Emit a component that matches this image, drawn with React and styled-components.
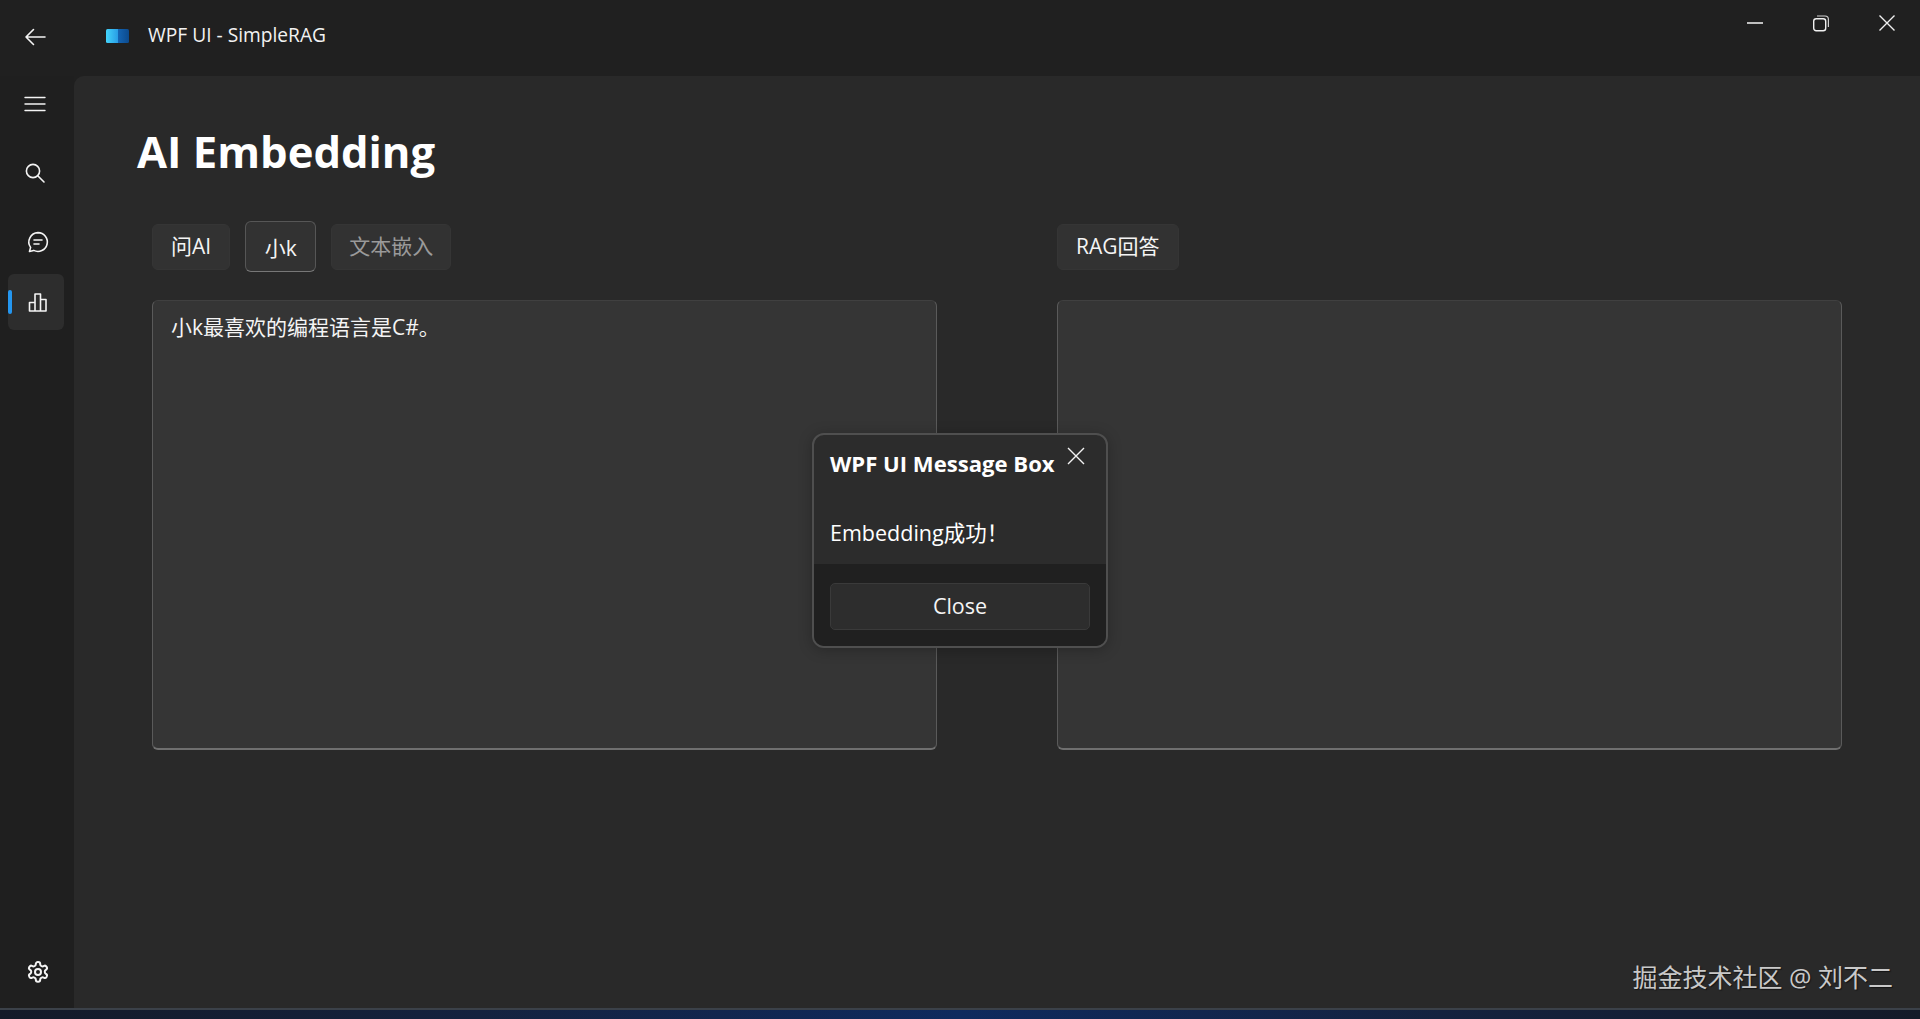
import React from "react";
import styled, { createGlobalStyle } from "styled-components";

const GlobalStyle = createGlobalStyle`
    html, body {
        margin: 0;
        padding: 0;
        height: 100%;
        background: #202020;
        overflow: hidden;
    }
    * {
        box-sizing: border-box;
    }
`;

const FONT = `"Open Sans", "Noto Sans CJK SC", sans-serif`;

// ****window*****
const Shell = styled.div`
    position: relative;
    display: flex;
    flex-direction: column;
    width: 1920px;
    height: 1019px;
    background: #202020;
    color: #ffffff;
    font-family: ${FONT};
`;

/////title bar/////
const TitleBar = styled.header`
    display: flex;
    align-items: center;
    flex: 0 0 76px;
    height: 76px;
    padding-bottom: 4px;
`;

const BackButton = styled.div`
    display: flex;
    justify-content: center;
    align-items: center;
    width: 70px;
    height: 100%;
    padding-top: 2px;
`;

const AppLogo = styled.svg`
    width: 24px;
    height: 16px;
    margin-left: 36px;
    margin-right: 18px;
`;

const AppTitle = styled.span`
    font-size: 19.2px;
    padding-bottom: 3px;
    color: #f2f2f2;
`;

const WindowControls = styled.div`
    display: flex;
    align-self: flex-start;
    margin-left: auto;
    padding: 14px 25px 0 0;
    gap: 50px;
`;

const ControlIcon = styled.svg`
    display: block;
    width: 16px;
    height: 18px;
`;

//////body///////
const Body = styled.div`
    display: flex;
    flex: 1;
    min-height: 0;
`;

const Sidebar = styled.nav`
    display: flex;
    flex-direction: column;
    align-items: flex-start;
    flex: 0 0 74px;
    background: #1f1f1f;
    padding: 0 0 8px 8px;
`;

const NavItem = styled.div`
    position: relative;
    display: flex;
    justify-content: center;
    align-items: center;
    width: 56px;
    height: 56px;
    margin-top: ${props => props.$gap || 0}px;
    margin-left: ${props => props.$shift || 0}px;
    padding-left: ${props => (props.$active ? 4 : 0)}px;
    border-radius: 6px;
    background: ${props => (props.$active ? "#2d2d2d" : "transparent")};

    &:before {
        content: ${props => (props.$active ? '""' : "none")};
        position: absolute;
        left: 0;
        top: 16px;
        width: 4px;
        height: 24px;
        border-radius: 2px;
        background: #2496ef;
    }
`;

const NavSpacer = styled.div`
    flex: 1;
`;

const NavIcon = styled.svg`
    display: block;
    width: 24px;
    height: 24px;
    fill: none;
    stroke: #f4f4f4;
    stroke-width: 1.6;
    stroke-linecap: round;
    stroke-linejoin: round;
`;

//////page///////
const Page = styled.main`
    flex: 1;
    min-width: 0;
    background: #292929;
    border-top-left-radius: 10px;
    padding: 51px 78px 0 78px;
`;

const PageTitle = styled.h1`
    margin: 0 0 0 -15px;
    height: 48px;
    font-size: 43.6px;
    line-height: 48px;
    font-weight: 700;
    color: #ffffff;
`;

const Columns = styled.div`
    display: grid;
    grid-template-columns: 785px 785px;
    column-gap: 120px;
    margin-top: 46px;
`;

const Column = styled.section`
    display: flex;
    flex-direction: column;
`;

const TabRow = styled.div`
    display: flex;
    align-items: center;
    gap: 15px;
    height: 51px;
    margin-bottom: 28px;
`;

const Tab = styled.div`
    display: flex;
    justify-content: center;
    align-items: center;
    height: ${props => (props.$focused ? 51 : 46)}px;
    padding: 0 ${props => props.$pad || 17}px ${props => (props.$focused ? 0 : 4)}px;
    border-radius: 6px;
    font-size: 21px;
    background: #323232;
    color: ${props => (props.$dim ? "#9a9a9a" : "#f4f4f4")};
    border: 1px solid ${props => (props.$focused ? "#565656" : "#353535")};
    border-bottom-color: ${props => (props.$focused ? "#777777" : "#353535")};
`;

const TextPanel = styled.div`
    height: 450px;
    padding: 10px 18px;
    border-radius: 6px;
    background: #353535;
    border: 1px solid #5a5a5a;
    border-top-color: #404040;
    border-bottom: 2px solid #6f6f6f;
    font-size: 21px;
    line-height: 32px;
    color: #f4f4f4;
`;

//////message box///////
const MessageBox = styled.div`
    position: absolute;
    left: 812px;
    top: 433px;
    display: flex;
    flex-direction: column;
    width: 296px;
    height: 215px;
    border: 2px solid #4f4f4f;
    border-radius: 12px;
    background: #2c2c2c;
    overflow: hidden;
    box-shadow: 0 2px 14px rgba(0, 0, 0, 0.25);
`;

const MessageBody = styled.div`
    position: relative;
    flex: 1;
    padding: 14px 0 0 16px;
`;

const MessageTitle = styled.div`
    font-size: 22.1px;
    line-height: 28px;
    font-weight: 700;
`;

const MessageText = styled.div`
    margin-top: 42px;
    font-size: 21.5px;
    line-height: 28px;
`;

const CloseX = styled.svg`
    position: absolute;
    right: 21px;
    top: 12px;
    width: 18px;
    height: 18px;
    stroke: #f2f2f2;
    stroke-width: 1.4;
`;

const MessageFooter = styled.div`
    flex: 0 0 82px;
    padding: 19px 16px 0 16px;
    background: #202020;
`;

const CloseButton = styled.div`
    display: flex;
    justify-content: center;
    align-items: center;
    height: 47px;
    padding-bottom: 2px;
    border-radius: 5px;
    background: #2d2d2d;
    border: 1px solid #3a3a3a;
    font-size: 21.5px;
    color: #f4f4f4;
`;

const Watermark = styled.div`
    position: absolute;
    right: 27px;
    top: 960px;
    font-size: 25px;
    line-height: 34px;
    color: #c9c9c9;
    text-shadow: 1px 1px 1px rgba(0, 0, 0, 0.5);
`;

/////taskbar/////
const Taskbar = styled.footer`
    flex: 0 0 11px;
    border-top: 2px solid #3b4149;
    background: linear-gradient(90deg, #141a28 0%, #14223f 25%, #0e2a5e 50%, #14223f 75%, #141a28 100%);
`;

const App = () => (
    <>
        <GlobalStyle />
        <Shell>
            <TitleBar>
                <BackButton>
                    <NavIcon viewBox="0 0 24 24">
                        <path d="M22 12H3M10.500 4.500L3 12l7.500 7.500" />
                    </NavIcon>
                </BackButton>
                <AppLogo viewBox="0 0 24 16">
                    <defs>
                        <linearGradient id="logo" x1="0" x2="1" y1="0" y2="0">
                            <stop offset="0" stopColor="#43d4fb" />
                            <stop offset="0.5" stopColor="#2a9fe6" />
                            <stop offset="0.52" stopColor="#1465b4" />
                            <stop offset="1" stopColor="#0c4a8d" />
                        </linearGradient>
                    </defs>
                    <rect x="0" y="1" width="23" height="14" rx="1.500" fill="url(#logo)" />
                </AppLogo>
                <AppTitle>WPF UI - SimpleRAG</AppTitle>
                <WindowControls>
                    <ControlIcon viewBox="0 0 16 18">
                        <path d="M0 9h16" stroke="#f4f4f4" strokeWidth="1.5" fill="none" />
                    </ControlIcon>
                    <ControlIcon viewBox="0 0 16 18">
                        <rect x="0.7" y="4.7" width="12" height="12" rx="2.5" stroke="#f0f0f0" strokeWidth="1.4" fill="none" />
                        <path d="M4 2h8a3.4 3.4 0 0 1 3.4 3.4V13" stroke="#cfcfcf" strokeWidth="1.2" fill="none" />
                    </ControlIcon>
                    <ControlIcon viewBox="0 0 16 18">
                        <path d="M0.5 1.5l15 15M15.5 1.5l-15 15" stroke="#f0f0f0" strokeWidth="1.4" fill="none" />
                    </ControlIcon>
                </WindowControls>
            </TitleBar>
            <Body>
                <Sidebar>
                    <NavItem $shift={-1}>
                        <NavIcon viewBox="0 0 24 24">
                            <path d="M2 5.500h20M2 12h20M2 18.500h20" strokeWidth="1.4" />
                        </NavIcon>
                    </NavItem>
                    <NavItem $gap={13} $shift={-1}>
                        <NavIcon viewBox="0 0 24 24">
                            <circle cx="10" cy="10" r="6.6" />
                            <path d="M15 15l6 6" />
                        </NavIcon>
                    </NavItem>
                    <NavItem $gap={13} $shift={2}>
                        <NavIcon viewBox="0 0 24 24">
                            <path d="M12 2.600a9.400 9.400 0 1 1-4.300 17.800l-4.200 1.100 1.100-4.100A9.400 9.400 0 0 1 12 2.600z" />
                            <path d="M8 10h8M8 14h5" />
                        </NavIcon>
                    </NavItem>
                    <NavItem $gap={4} $active>
                        <NavIcon viewBox="0 0 24 24">
                            <path d="M3.500 21V12.500h5.500V21M9 21V4h5.500v17M14.500 21V9.500h5.500V21M3.500 21h16.500" />
                        </NavIcon>
                    </NavItem>
                    <NavSpacer />
                    <NavItem $shift={2}>
                        <NavIcon viewBox="0 0 24 24">
                            <g strokeWidth="2">
                                <circle cx="12" cy="12" r="3" />
                                <path d="M12.200 2h-.4a2 2 0 0 0-2 2v.2a2 2 0 0 1-1 1.700l-.4.200a2 2 0 0 1-2 0l-.2-.1a2 2 0 0 0-2.700.700l-.2.400a2 2 0 0 0 .7 2.700l.2.100a2 2 0 0 1 1 1.700v.5a2 2 0 0 1-1 1.700l-.2.100a2 2 0 0 0-.7 2.700l.2.400a2 2 0 0 0 2.700.700l.2-.100a2 2 0 0 1 2 0l.4.200a2 2 0 0 1 1 1.700v.2a2 2 0 0 0 2 2h.4a2 2 0 0 0 2-2v-.2a2 2 0 0 1 1-1.700l.4-.200a2 2 0 0 1 2 0l.2.100a2 2 0 0 0 2.700-.700l.2-.400a2 2 0 0 0-.7-2.700l-.2-.100a2 2 0 0 1-1-1.700v-.5a2 2 0 0 1 1-1.700l.2-.100a2 2 0 0 0 .7-2.700l-.2-.400a2 2 0 0 0-2.700-.700l-.2.100a2 2 0 0 1-2 0l-.4-.200a2 2 0 0 1-1-1.700V4a2 2 0 0 0-2-2z" />
                            </g>
                        </NavIcon>
                    </NavItem>
                </Sidebar>
                <Page>
                    <PageTitle>AI Embedding</PageTitle>
                    <Columns>
                        <Column>
                            <TabRow>
                                <Tab $pad={18}>问AI</Tab>
                                <Tab $focused $pad={18.5}>小k</Tab>
                                <Tab $dim>文本嵌入</Tab>
                            </TabRow>
                            <TextPanel>小k最喜欢的编程语言是C#。</TextPanel>
                        </Column>
                        <Column>
                            <TabRow>
                                <Tab $pad={18}>RAG回答</Tab>
                            </TabRow>
                            <TextPanel />
                        </Column>
                    </Columns>
                </Page>
            </Body>
            <Taskbar />
            <MessageBox>
                <MessageBody>
                    <MessageTitle>WPF UI Message Box</MessageTitle>
                    <CloseX viewBox="0 0 18 18">
                        <path d="M1 1l16 16M17 1L1 17" fill="none" />
                    </CloseX>
                    <MessageText>Embedding成功！</MessageText>
                </MessageBody>
                <MessageFooter>
                    <CloseButton>Close</CloseButton>
                </MessageFooter>
            </MessageBox>
            <Watermark>掘金技术社区 @ 刘不二</Watermark>
        </Shell>
    </>
);

export default App;
